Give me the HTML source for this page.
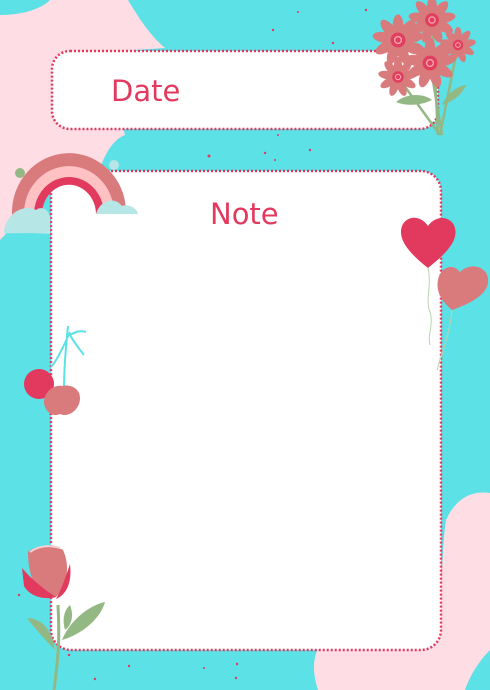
<!DOCTYPE html>
<html><head><meta charset="utf-8"><style>
html,body{margin:0;padding:0;width:490px;height:690px;overflow:hidden;background:#5ce1e6}
svg{display:block}
text{font-family:"DejaVu Sans","Liberation Sans",sans-serif}
</style></head><body>
<svg width="490" height="690" viewBox="0 0 490 690" xmlns="http://www.w3.org/2000/svg">
<defs>
<g id="fl">
<g fill="#d97a7c">
<ellipse cx="0" cy="-10" rx="4" ry="9"/>
<ellipse cx="0" cy="-10" rx="4" ry="9" transform="rotate(40)"/>
<ellipse cx="0" cy="-10" rx="4" ry="9" transform="rotate(80)"/>
<ellipse cx="0" cy="-10" rx="4" ry="9" transform="rotate(120)"/>
<ellipse cx="0" cy="-10" rx="4" ry="9" transform="rotate(160)"/>
<ellipse cx="0" cy="-10" rx="4" ry="9" transform="rotate(200)"/>
<ellipse cx="0" cy="-10" rx="4" ry="9" transform="rotate(240)"/>
<ellipse cx="0" cy="-10" rx="4" ry="9" transform="rotate(280)"/>
<ellipse cx="0" cy="-10" rx="4" ry="9" transform="rotate(320)"/>
</g>
<circle r="5.5" fill="#e0405e"/>
<circle r="2.5" fill="none" stroke="#f6a6b2" stroke-width="1"/>
</g>
</defs>
<rect width="490" height="690" fill="#5ce1e6"/>
<path d="M0 15 C20 15 40 10 50 0 L128 0 C140 20 150 35 165 48 L135 50 C120 70 118 110 125 135 C112 140 105 155 100 168 L60 170 C40 190 20 220 0 240 Z" fill="#ffdde5"/>
<path d="M318 690 C308 660 318 640 335 630 L430 630 C445 600 440 560 446 520 C455 500 470 490 490 493 L490 650 C480 660 470 675 465 690 Z" fill="#ffdde5"/>
<rect x="52" y="51" width="386" height="78" rx="18" fill="#fff" stroke="#e23a5e" stroke-width="2.5" stroke-dasharray="2 2"/>
<text x="111" y="101" font-size="29" fill="#e23a5e">Date</text>
<rect x="51" y="171" width="390" height="479" rx="20" fill="#fff" stroke="#e23a5e" stroke-width="2.5" stroke-dasharray="2 2"/>
<text x="210" y="224" font-size="29" fill="#e23a5e">Note</text>
<g fill="#e23a5e">
<circle cx="273" cy="30" r="1.2"/><circle cx="298" cy="12" r="1"/><circle cx="333" cy="43" r="1.2"/><circle cx="366" cy="10" r="1.2"/>
<circle cx="209" cy="156" r="1.5"/><circle cx="265" cy="153" r="1.2"/><circle cx="275" cy="160" r="1"/><circle cx="310" cy="150" r="1.2"/><circle cx="278" cy="135" r="1"/>
<circle cx="19" cy="595" r="1.2"/><circle cx="69" cy="655" r="1.2"/><circle cx="129" cy="666" r="1.2"/><circle cx="95" cy="679" r="1.2"/><circle cx="204" cy="668" r="1"/><circle cx="237" cy="664" r="1.2"/><circle cx="236" cy="678" r="1.2"/>
</g>
<g stroke="#94b884" stroke-width="2.5" fill="none">
<path d="M398 77 L440 135"/><path d="M430 63 L442 135"/><path d="M432 20 L438 135"/><path d="M458 45 L440 135"/>
</g>
<path d="M396 102 C408 92 425 94 432 100 C420 106 405 106 396 102Z" fill="#94b884"/>
<path d="M442 105 C448 92 458 86 466 85 C462 95 452 102 442 105Z" fill="#94b884"/>
<use href="#fl" transform="translate(432,20) scale(1.25)"/>
<use href="#fl" transform="translate(458,45) scale(0.95)"/>
<use href="#fl" transform="translate(398,40) scale(1.35)"/>
<use href="#fl" transform="translate(430,63) scale(1.35)"/>
<use href="#fl" transform="translate(398,77) scale(1.05)"/>
<path d="M12 215 A50 52 0 0 1 126 210 L112 212 A36 38 0 0 0 26 215 Z" fill="#d97a7c"/>
<path d="M24 215 A38 40 0 0 1 114 212 L104 214 A28 30 0 0 0 34 215 Z" fill="#ffc1c4"/>
<path d="M34 215 A28 30 0 0 1 104 214 L96 214 A20 22 0 0 0 42 215 Z" fill="#e23a5e"/>
<path d="M4 230 C8 212 24 204 36 210 C44 204 52 214 50 222 L50 234 C30 232 15 234 4 233 Z" fill="#b6e6e6"/>
<path d="M96 214 C100 200 115 196 122 206 C130 203 138 210 138 214 Z" fill="#b6e6e6"/>
<circle cx="114" cy="165" r="5" fill="#b6e6e6"/><circle cx="20" cy="173" r="5" fill="#94b884"/>
<path d="M428 268 C405 250 398 237 402 226 C406 216 420 214 428 226 C436 214 452 216 455 228 C458 240 448 252 428 268Z" fill="#e23a5e"/>
<path d="M428 268 C432 285 425 300 430 312 C434 325 427 335 430 345" stroke="#b6d6b0" stroke-width="1" fill="none"/>
<path d="M452 310 C440 300 436 290 438 280 C440 268 452 262 460 272 C470 262 486 266 488 278 C490 292 475 302 452 310Z" fill="#d97a7c"/>
<path d="M452 310 C450 330 445 345 440 360 C438 365 438 368 437 370" stroke="#b6d6b0" stroke-width="1" fill="none"/>
<path d="M64 390 C64 365 66 345 68 326 M70 332 C62 350 56 362 51 367 M70 335 C75 332 80 330 86 332 M70 335 C74 342 80 350 84 355" stroke="#5ce1e6" stroke-width="2" fill="none"/>
<circle cx="39" cy="384" r="15" fill="#e23a5e"/>
<path d="M62 386 C70 384 80 388 80 398 C80 410 68 418 60 414 C52 418 44 410 44 402 C44 392 54 384 62 386Z" fill="#d97a7c"/>
<path d="M54 690 C58 660 60 640 58 605" stroke="#94b884" stroke-width="3" fill="none"/>
<path d="M62 640 C70 620 90 605 105 602 C100 620 80 635 62 640Z" fill="#94b884"/>
<path d="M55 650 C45 640 32 625 27 618 C40 618 52 628 55 650Z" fill="#94b884"/>
<path d="M65 630 C62 620 64 610 70 605 C74 615 72 625 65 630Z" fill="#94b884"/>
<path d="M28 552 C36 544 55 545 63 550 C70 565 68 585 56 597 C40 597 28 582 28 552Z" fill="#d97a7c"/>
<path d="M22 568 C28 575 40 587 56 597 C45 600 30 597 24 586 Z" fill="#e23a5e"/>
<path d="M70 564 C72 580 68 594 56 599 C62 588 66 576 70 564Z" fill="#e23a5e"/>
<path d="M30 552 C40 545 50 545 60 548" stroke="#f8d0d4" stroke-width="2" fill="none"/>
</svg>
</body></html>
